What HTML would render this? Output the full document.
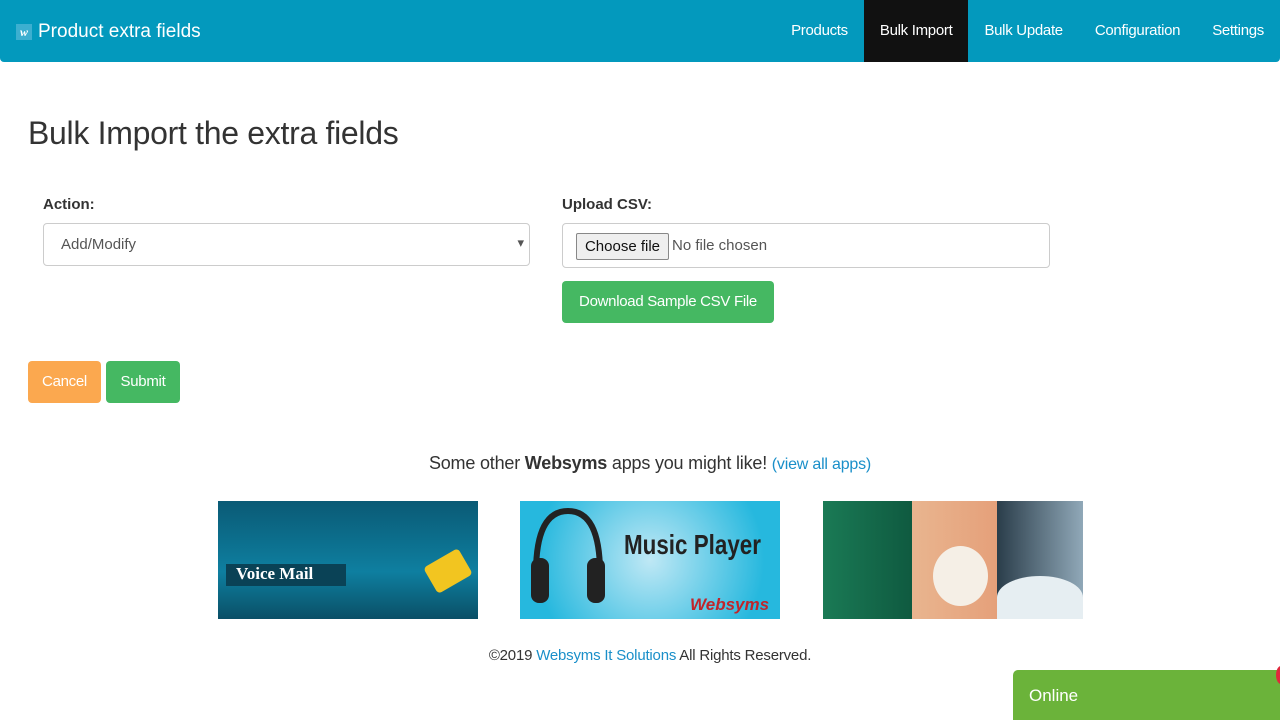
<!DOCTYPE html>
<html><head><meta charset="utf-8"><style>
*{box-sizing:border-box;margin:0;padding:0}
body{width:1280px;height:720px;overflow:hidden;background:#fff;font-family:"Liberation Sans",sans-serif;color:#333;position:relative}
.nav{position:absolute;left:0;top:0;width:1280px;height:62px;background:#0399bd;border-radius:0 0 4px 4px}
.brand{position:absolute;left:16px;top:21px;color:#fff;font-size:19px;display:flex;align-items:center}
.brand .w{width:16px;height:16px;background:#3cafd0;font-size:12px;font-style:italic;font-weight:bold;text-align:center;line-height:16px;margin-right:6px;font-family:"Liberation Serif",serif}
.menu{position:absolute;right:0;top:0;height:62px;display:flex}
.menu a{color:#fff;font-size:15px;line-height:62px;padding:0 16px;text-decoration:none;letter-spacing:-0.3px}
.menu a.act{background:#111}
h1{position:absolute;left:28px;top:115px;font-size:32px;font-weight:normal;color:#333;letter-spacing:-0.3px}
label{position:absolute;font-weight:bold;font-size:15px;color:#333}
.sel{position:absolute;left:43px;top:223px;width:487px;height:43px;border:1px solid #ccc;border-radius:4px;padding:12px 17px;font-size:15px;color:#555}
.sel:after{content:"▾";position:absolute;right:5px;top:11px;font-size:13px}
.file{position:absolute;left:562px;top:223px;width:488px;height:45px;border:1px solid #ccc;border-radius:4px;font-size:15px;color:#555}
.file .b{position:absolute;left:13px;top:9px;width:93px;height:27px;border:1px solid #888;border-radius:2px;background:#efefef;color:#111;text-align:center;line-height:25px}
.file span{position:absolute;left:109px;top:13px}
.btn{position:absolute;color:#fff;font-size:15px;border-radius:4px;text-align:center;letter-spacing:-0.3px}
.caption{position:absolute;top:453px;left:0;width:1300px;text-align:center;font-size:18px;color:#333;letter-spacing:-0.2px}
.caption a{color:#1a8fc9;font-size:16px}
.img{position:absolute;top:501px;width:260px;height:118px;overflow:hidden}
.foot{position:absolute;top:647px;left:0;width:1300px;text-align:center;font-size:15px;color:#333;letter-spacing:-0.2px}
.foot a{color:#1a8fc9}
.online{position:absolute;left:1013px;top:670px;width:267px;height:50px;background:#6bb33a;border-radius:5px 0 0 0;color:#fff;font-size:17px;padding:16px 16px}
</style></head><body>
<div class="nav"><div class="brand"><div class="w">w</div>Product extra fields</div>
<div class="menu"><a>Products</a><a class="act">Bulk Import</a><a>Bulk Update</a><a>Configuration</a><a>Settings</a></div></div>
<h1>Bulk Import the extra fields</h1>
<label style="left:43px;top:196px">Action:</label>
<div class="sel">Add/Modify</div>
<label style="left:562px;top:196px">Upload CSV:</label>
<div class="file"><div class="b">Choose file</div><span>No file chosen</span></div>
<div class="btn" style="left:562px;top:281px;width:212px;height:42px;line-height:42px;background:#45b862">Download Sample CSV File</div>
<div class="btn" style="left:28px;top:361px;width:73px;height:42px;line-height:42px;background:#fba84f">Cancel</div>
<div class="btn" style="left:106px;top:361px;width:74px;height:42px;line-height:42px;background:#45b862">Submit</div>
<div class="caption">Some other <b>Websyms</b> apps you might like! <a>(view all apps)</a></div>
<div class="img" style="left:218px;background:linear-gradient(180deg,#0a5a75,#0e7fa0 60%,#0a4f66)">
<div style="position:absolute;left:8px;top:63px;width:120px;height:22px;background:#0a4256;color:#fff;font-family:'Liberation Serif',serif;font-weight:bold;font-size:17px;padding-left:10px">Voice Mail</div>
<div style="position:absolute;left:210px;top:55px;width:40px;height:30px;background:#f2c520;transform:rotate(-30deg);border-radius:4px"></div></div>
<div class="img" style="left:520px;background:radial-gradient(circle at 50% 50%,#bfe8f5,#26b8de 80%)">
<svg style="position:absolute;left:8px;top:2px" width="80" height="112"><path d="M8 70 Q8 8 40 8 Q72 8 72 70" stroke="#222" stroke-width="6" fill="none"/><rect x="3" y="55" width="18" height="45" rx="8" fill="#222"/><rect x="59" y="55" width="18" height="45" rx="8" fill="#222"/></svg>
<div style="position:absolute;left:104px;top:28px;font-size:28px;font-weight:bold;color:#222;white-space:nowrap;transform:scaleX(.8);transform-origin:left">Music Player</div>
<div style="position:absolute;left:170px;top:94px;font-size:17px;font-weight:bold;font-style:italic;color:#c0252b">Websyms</div></div>
<div class="img" style="left:823px;background:linear-gradient(90deg,#1a7a55 0,#0f5a40 89px,#e9b58f 89px,#e5a07a 174px,#2a3d4a 174px,#90a8b8)">
<div style="position:absolute;left:110px;top:45px;width:55px;height:60px;background:#f5efe6;border-radius:50%"></div>
<div style="position:absolute;left:174px;top:75px;width:86px;height:43px;background:#e6eef2;border-radius:50% 50% 0 0"></div></div>
<div class="foot">©2019 <a>Websyms It Solutions</a> All Rights Reserved.</div>
<div class="online">Online</div>
<div style="position:absolute;left:1276px;top:666px;width:10px;height:18px;background:#e0283c;border-radius:50%"></div>
</body></html>
